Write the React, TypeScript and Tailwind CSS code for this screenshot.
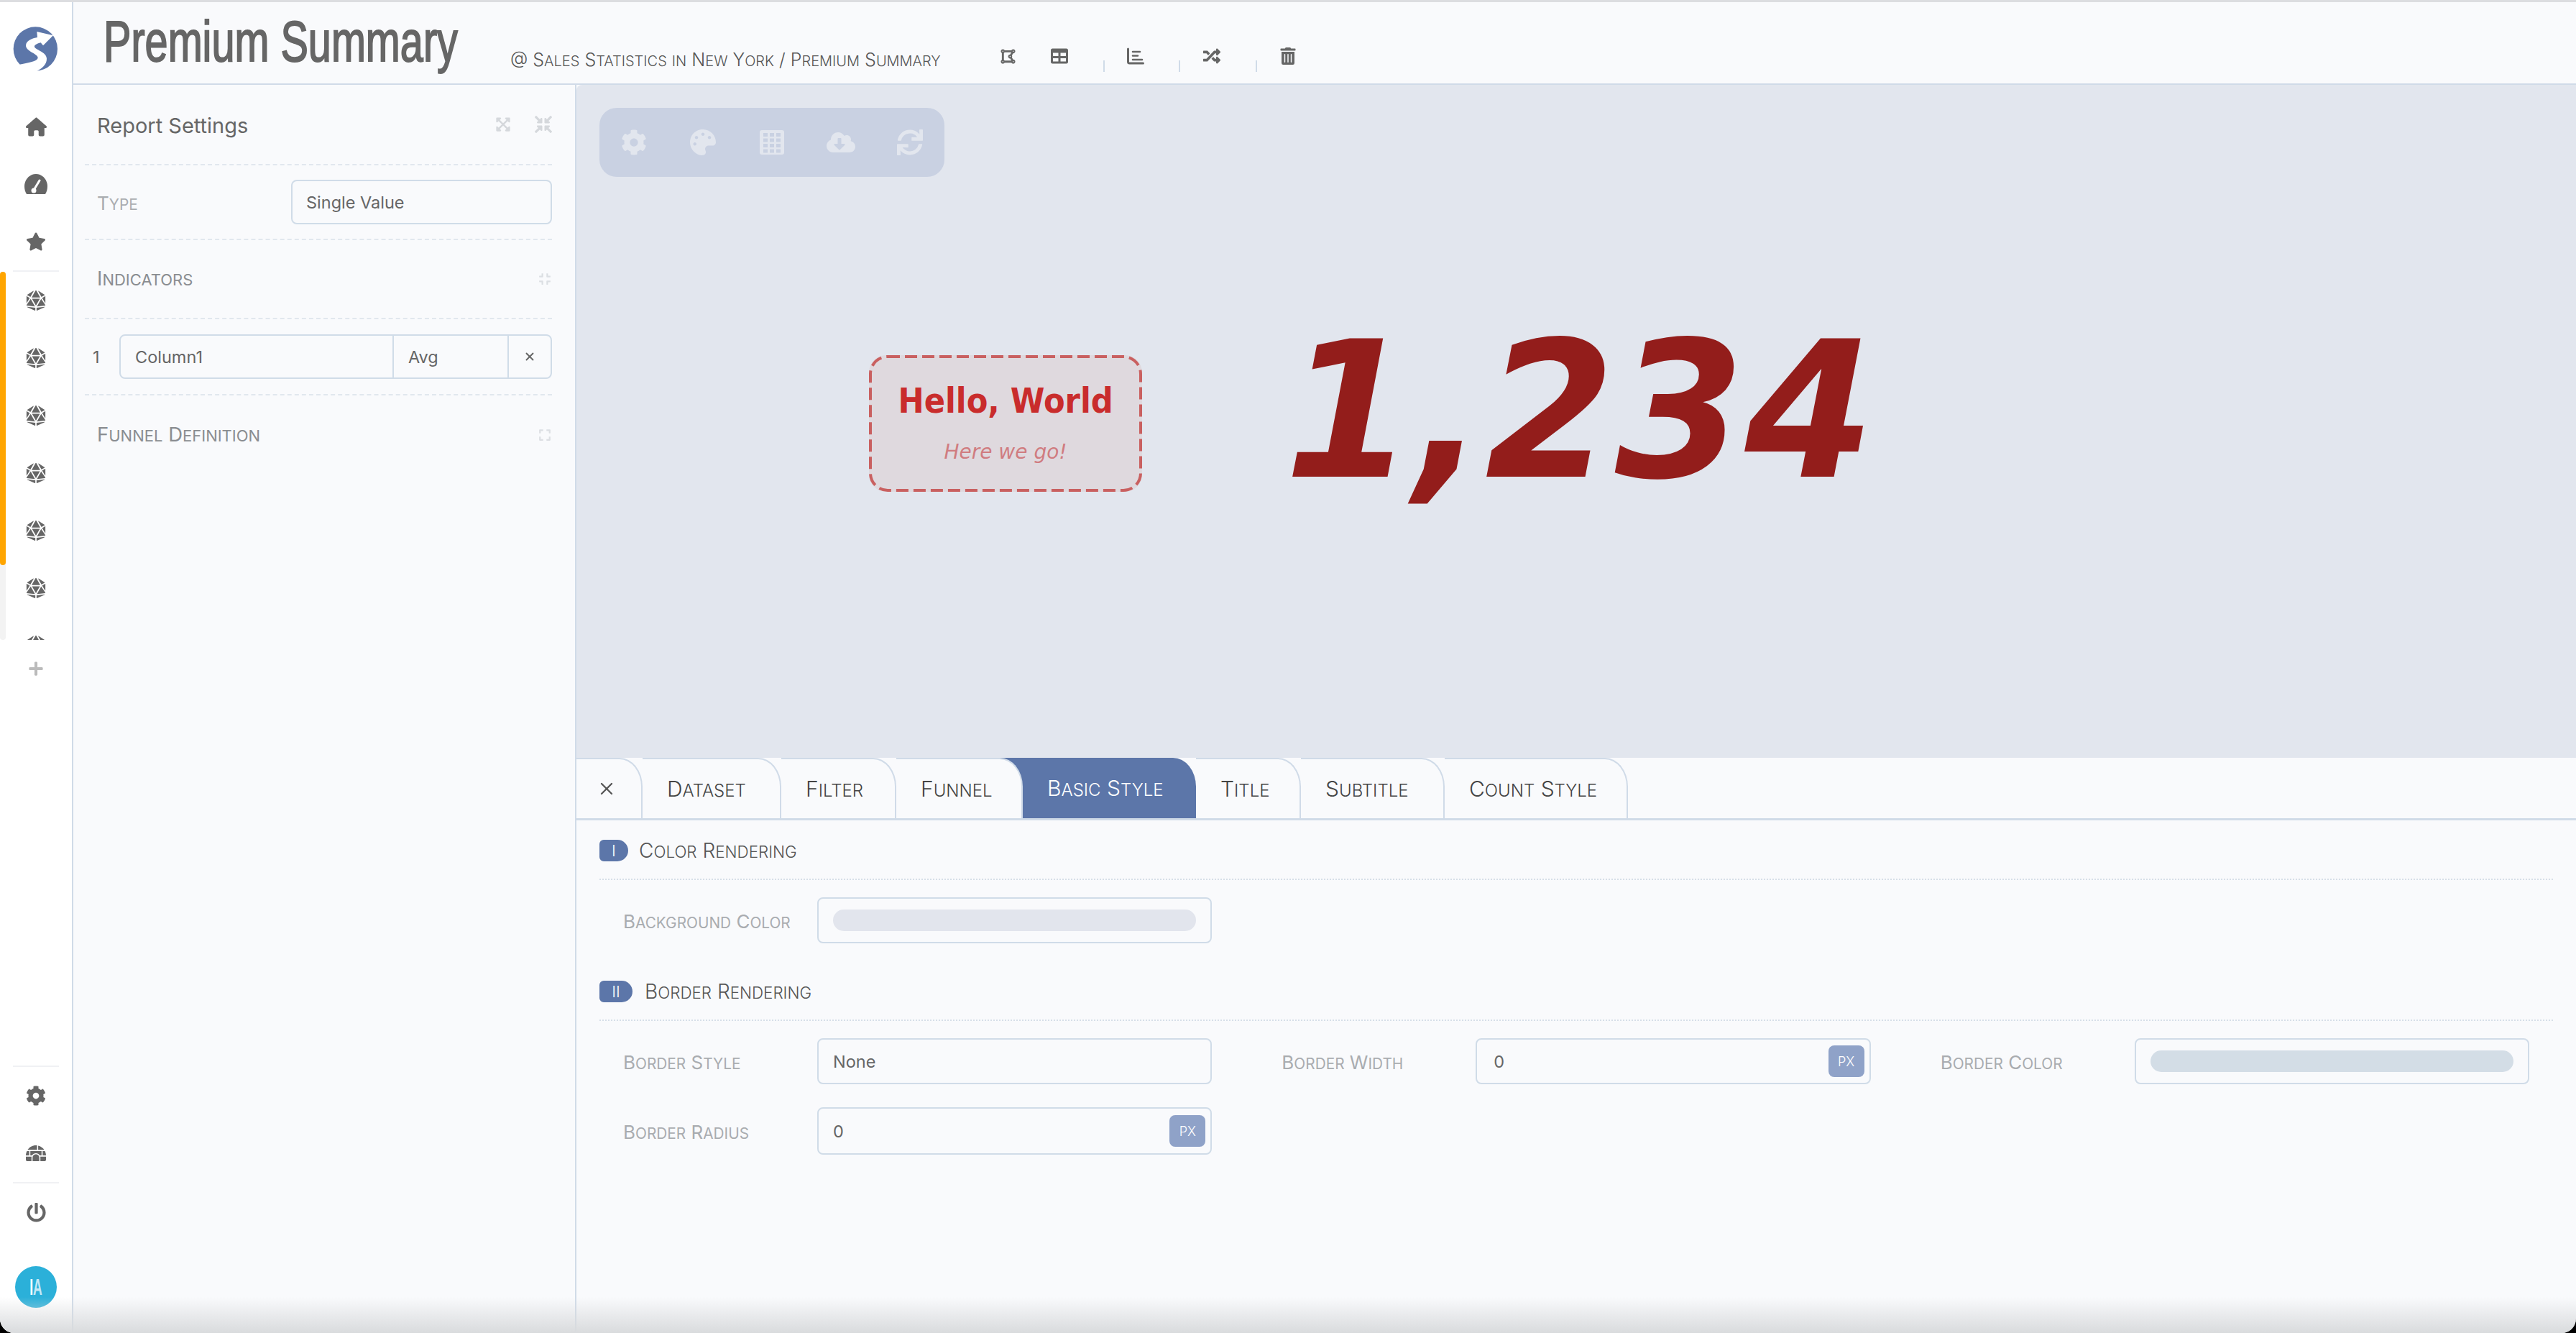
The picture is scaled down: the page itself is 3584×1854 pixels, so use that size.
import * as React from "react";
import {
  FaCloudDownloadAlt,
  FaCog,
  FaCompress,
  FaCompressArrowsAlt,
  FaDiceD20,
  FaDrawPolygon,
  FaExpand,
  FaExpandArrowsAlt,
  FaIgloo,
  FaPalette,
  FaPlus,
  FaPowerOff,
  FaRandom,
  FaStar,
  FaSync,
  FaTable,
  FaTrashAlt,
} from "react-icons/fa";
import { FaHouse } from "react-icons/fa6";
import { X } from "lucide-react";

function Caps({ children }: { children: string }) {
  const parts = children.match(/[a-z]+|[^a-z]+/g) ?? [];
  return (
    <>
      {parts.map((p, i) =>
        /[a-z]/.test(p) ? (
          <span key={i} className="text-[0.8em] uppercase">
            {p}
          </span>
        ) : (
          <span key={i}>{p}</span>
        ),
      )}
    </>
  );
}

function Logo() {
  return (
    <svg width="80" height="80" viewBox="0 0 240 240">
      <circle cx="118" cy="114" r="92" fill="#5c76a9" />
      <path
        d="M48 180 C90 172 125 165 128 152 C130 135 78 125 78 100 C78 78 110 68 126 66 L124 42 L192 58 L150 100 L140 88 C125 92 112 98 114 106 C118 118 165 128 165 155 C165 180 145 195 125 206 L120 230 L40 205 Z"
        fill="#fff"
      />
    </svg>
  );
}

function GaugeIcon() {
  return (
    <svg width="32" height="28" viewBox="0 0 32 28">
      <path d="M3 28 C1 25 0 21 0 17 C0 8 7 0 16 0 C25 0 32 8 32 17 C32 21 31 25 29 28 Z" fill="currentColor" />
      <path d="M12 24 L21 9" stroke="#fff" strokeWidth="3" strokeLinecap="round" />
      <circle cx="13" cy="23" r="3.5" fill="#fff" />
    </svg>
  );
}

function AxisBarsIcon() {
  return (
    <svg width="24" height="24" viewBox="0 0 24 24" fill="none" stroke="currentColor" strokeWidth="3" strokeLinecap="round">
      <path d="M1.5 2 V20 Q1.5 22 3.5 22 H22.5" />
      <path d="M8 6 H18 M8 11.5 H15 M8 17 H21" strokeWidth="2.6" />
    </svg>
  );
}

function GridIcon() {
  const holes = [];
  for (let r = 0; r < 4; r++) {
    for (let c = 0; c < 3; c++) {
      holes.push(<rect key={`${r}-${c}`} x={6 + c * 9} y={5 + r * 7.5} width="6" height="5" fill="#c9d1e2" />);
    }
  }
  return (
    <svg width="36" height="36" viewBox="0 0 36 36">
      <rect x="1" y="1" width="34" height="34" rx="3" fill="currentColor" />
      {holes}
    </svg>
  );
}

function NavItem({ children }: { children: React.ReactNode }) {
  return <div className="flex h-[80px] shrink-0 items-center justify-center text-[#666]">{children}</div>;
}

function Sidebar() {
  return (
    <aside className="flex w-[102px] shrink-0 flex-col border-r-2 border-[#d0dbe8] bg-white">
      <div className="flex h-[133px] shrink-0 justify-center pt-[27px]">
        <Logo />
      </div>
      <NavItem><FaHouse size={29} /></NavItem>
      <NavItem><GaugeIcon /></NavItem>
      <NavItem><FaStar size={28} /></NavItem>
      <div className="mx-[18px] h-[2px] shrink-0 bg-[#f0f1f4]" />
      <div className="relative h-[512px] shrink-0 overflow-hidden">
        <div className="absolute left-0 top-0 h-full w-[8px] rounded-full bg-[#f3f3f3]">
          <div className="h-[408px] w-full rounded-full bg-[#ffa500]" />
        </div>
        {[0, 1, 2, 3, 4, 5, 6].map((i) => (
          <NavItem key={i}><FaDiceD20 size={28} /></NavItem>
        ))}
      </div>
      <div className="flex h-[80px] shrink-0 items-center justify-center text-[#bbbbbb]">
        <FaPlus size={22} />
      </div>
      <div className="flex-1" />
      <div className="mx-[18px] h-[2px] shrink-0 bg-[#f0f1f4]" />
      <NavItem><FaCog size={28} /></NavItem>
      <NavItem><FaIgloo size={28} /></NavItem>
      <div className="mx-[18px] h-[2px] shrink-0 bg-[#f0f1f4]" />
      <NavItem><FaPowerOff size={27} /></NavItem>
      <div className="mb-[35px] ml-[21px] mt-[35px] flex h-[58px] w-[58px] shrink-0 items-center justify-center overflow-hidden rounded-full bg-[#2bb0d9] [font-family:'Liberation_Sans',sans-serif] text-[32px] font-bold leading-none">
        <span className="scale-x-[0.55]">
          <span className="text-white">I</span>
          <span className="text-[#c4e8f6]">A</span>
        </span>
      </div>
    </aside>
  );
}

function HeaderIcon({ children }: { children: React.ReactNode }) {
  return <div className="flex w-[72px] justify-center text-[#666]">{children}</div>;
}

function Sep({ className }: { className: string }) {
  return <div className={`mt-[28px] h-[16px] w-[2px] bg-[#d0dbe8] ${className}`} />;
}

function Header() {
  return (
    <header className="flex h-[115px] shrink-0 border-b-2 border-[#d0dbe8]">
      <div className="w-[608px] shrink-0 pl-[42px]">
        <div className="origin-left scale-x-[0.72] whitespace-nowrap [font-family:'Liberation_Sans',sans-serif] text-[80px] leading-[110px] text-[#666] [-webkit-text-stroke:2px_#666]">
          Premium Summary
        </div>
      </div>
      <div className="w-[656px] shrink-0 whitespace-nowrap pt-[63px] text-[25px] font-light leading-[34px] text-[#555]">
        <Caps>@ Sales Statistics in New York / Premium Summary</Caps>
      </div>
      <div className="mt-[51px] flex h-[48px] items-center self-start">
        <HeaderIcon><FaDrawPolygon size={23} /></HeaderIcon>
        <HeaderIcon><FaTable size={24} /></HeaderIcon>
        <Sep className="ml-[25px] mr-[7px]" />
        <HeaderIcon><AxisBarsIcon /></HeaderIcon>
        <Sep className="ml-[24px] mr-[8px]" />
        <HeaderIcon><FaRandom size={24} /></HeaderIcon>
        <Sep className="ml-[25px] mr-[7px]" />
        <HeaderIcon><FaTrashAlt size={24} /></HeaderIcon>
      </div>
    </header>
  );
}

function Dashed() {
  return <div className="h-0 border-t-2 border-dashed border-[#e1e7ee]" />;
}

function SettingsPanel() {
  return (
    <section className="flex w-[700px] shrink-0 flex-col border-r-2 border-[#d0dbe8] pl-[16px] pr-[32px] text-[#666]">
      <div className="flex h-[110px] items-center pl-[17px]">
        <span className="pt-[3px] text-[29px]">Report Settings</span>
        <div className="ml-auto flex items-center gap-[33px] text-[#d5d8dc]">
          <FaExpandArrowsAlt size={22} />
          <FaCompressArrowsAlt size={24} />
        </div>
      </div>
      <Dashed />
      <div className="flex h-[102px] items-center pl-[17px]">
        <span className="w-[270px] pt-[2px] text-[26px] text-[#a9acb0]"><Caps>Type</Caps></span>
        <div className="flex h-[62px] flex-1 items-center rounded-lg border-2 border-[#d0dce8] pl-[19px] pt-[2px] text-[23.5px]">
          Single Value
        </div>
      </div>
      <Dashed />
      <div className="flex h-[108px] items-center pl-[17px] pr-[1px]">
        <span className="text-[27.5px] text-[#8a8d91]"><Caps>Indicators</Caps></span>
        <FaCompress size={18} className="ml-auto text-[#dcdfe3]" />
      </div>
      <Dashed />
      <div className="flex h-[104px] items-center pl-[11px] text-[23.5px]">
        <span className="w-[37px] pt-[2px]">1</span>
        <div className="flex h-[62px] flex-1 items-stretch rounded-lg border-2 border-[#d0dce8]">
          <div className="flex w-[380px] items-center border-r-2 border-[#d0dce8] pl-[20px] pt-[2px]">Column1</div>
          <div className="flex w-[160px] items-center border-r-2 border-[#d0dce8] pl-[20px] pt-[2px]">Avg</div>
          <div className="flex flex-1 items-center justify-center">
            <X size={18} strokeWidth={2.5} />
          </div>
        </div>
      </div>
      <Dashed />
      <div className="flex h-[110px] items-center pl-[17px] pr-[1px]">
        <span className="text-[27.5px] text-[#8a8d91]"><Caps>Funnel Definition</Caps></span>
        <FaExpand size={18} className="ml-auto text-[#dcdfe3]" />
      </div>
    </section>
  );
}

function Canvas() {
  return (
    <div className="relative flex h-[936px] shrink-0 items-start rounded-tl-[8px] bg-[#e2e6ee] pl-[407px] pt-[376px] [font-family:'DejaVu_Sans',sans-serif]">
      <div className="absolute left-[32px] top-[32px] flex h-[96px] w-[480px] items-center rounded-[24px] bg-[#c9d1e2] text-[#e2e6ee]">
        <div className="flex w-[96px] justify-center"><FaCog size={36} /></div>
        <div className="flex w-[96px] justify-center"><FaPalette size={36} /></div>
        <div className="flex w-[96px] justify-center"><GridIcon /></div>
        <div className="flex w-[96px] justify-center"><FaCloudDownloadAlt size={40} /></div>
        <div className="flex w-[96px] justify-center"><FaSync size={36} /></div>
      </div>
      <div className="relative flex h-[190px] w-[380px] shrink-0 flex-col items-center rounded-[24px] bg-[#dfd9de]">
        <svg className="absolute inset-0" width="380" height="190">
          <rect x="2" y="2" width="376" height="186" rx="24" fill="none" stroke="#c96060" strokeWidth="4" strokeDasharray="17 7" />
        </svg>
        <div className="mt-[35px] scale-x-[0.9] whitespace-nowrap text-[48px] font-bold leading-[56px] text-[#c92c2c]">Hello, World</div>
        <div className="mt-[26px] text-[28px] italic leading-[36px] text-[#d07c80]">Here we go!</div>
      </div>
      <div className="-mt-[72px] ml-[198px] origin-left scale-x-[0.983] whitespace-nowrap text-[264px] font-bold italic leading-[300px] text-[#931d1b]">1,234</div>
    </div>
  );
}

const tabs = [
  { label: "Dataset", w: "w-[193px]" },
  { label: "Filter", w: "w-[160px]" },
  { label: "Funnel", w: "w-[176px]" },
  { label: "Title", w: "w-[146px]" },
  { label: "Subtitle", w: "w-[200px]" },
  { label: "Count Style", w: "w-[255px]" },
];

function Tab({ label, w }: { label: string; w: string }) {
  return (
    <div
      className={`relative z-10 flex h-full ${w} items-center rounded-tr-[32px_40px] border-r-2 border-t-2 border-[#d0dbe8] bg-[#f9fafc] pl-[34px] text-[30px] font-light text-[#444]`}
    >
      <span><Caps>{label}</Caps></span>
    </div>
  );
}

function TabBar() {
  return (
    <div className="flex h-[87px] shrink-0 border-b-[3px] border-[#d0dbe8]">
      <div className="relative z-10 flex h-full w-[92px] items-center rounded-tr-[32px_40px] border-r-2 border-t-2 border-[#d0dbe8] bg-[#f9fafc] pl-[28px] text-[#555]">
        <X size={28} strokeWidth={2} />
      </div>
      {tabs.slice(0, 3).map((t) => (
        <Tab key={t.label} {...t} />
      ))}
      <div className="-ml-[32px] flex h-full w-[273px] items-center rounded-tr-[32px_40px] bg-[#5c76a9] pl-[66px] text-[30px] font-light text-white">
        <span><Caps>Basic Style</Caps></span>
      </div>
      {tabs.slice(3).map((t) => (
        <Tab key={t.label} {...t} />
      ))}
    </div>
  );
}

function SectionTitle({ mark, w, title, gap }: { mark: string; w: string; title: string; gap: string }) {
  return (
    <div className="flex h-[56px] items-start border-b-2 border-dotted border-[#d6dfe8]">
      <span
        className={`flex h-[30px] ${w} items-center justify-center rounded-l-[6px] rounded-r-[15px] bg-[#5c76a9] text-[22px] font-light leading-none text-white`}
      >
        {mark}
      </span>
      <span className={`${gap} text-[28px] font-light leading-[30px] text-[#555]`}><Caps>{title}</Caps></span>
    </div>
  );
}

function Field({ label, children, h = "h-[64px]" }: { label: string; children: React.ReactNode; h?: string }) {
  return (
    <div className="flex items-center">
      <span className="w-[270px] shrink-0 pt-[2px] text-[26px] text-[#a9acb0]"><Caps>{label}</Caps></span>
      <div className={`flex ${h} flex-1 items-center rounded-lg border-2 border-[#d0dce8] text-[23.5px] text-[#666]`}>
        {children}
      </div>
    </div>
  );
}

function Px() {
  return (
    <span className="ml-auto mr-[7px] flex h-[44px] w-[50px] items-center justify-center rounded-lg bg-[#8fa2c8] text-[18px] font-light text-white">
      PX
    </span>
  );
}

function BottomPanel() {
  return (
    <div className="flex flex-1 flex-col">
      <TabBar />
      <div className="px-[32px] pt-[27px]">
        <SectionTitle mark="I" w="w-[40px]" title="Color Rendering" gap="ml-[15px]" />
        <div className="mb-[52px] mt-[24px] grid grid-cols-3 gap-x-[97px] px-[33px]">
          <Field label="Background Color">
            <span className="mx-[20px] h-[30px] flex-1 rounded-full bg-[#e2e5ed]" />
          </Field>
        </div>
        <SectionTitle mark="II" w="w-[46px]" title="Border Rendering" gap="ml-[17px]" />
        <div className="mt-[24px] grid grid-cols-3 gap-x-[97px] gap-y-[32px] px-[33px]">
          <Field label="Border Style">
            <span className="pl-[20px] pt-[2px]">None</span>
          </Field>
          <Field label="Border Width">
            <span className="pl-[23px] pt-[2px]">0</span>
            <Px />
          </Field>
          <Field label="Border Color">
            <span className="mx-[20px] h-[30px] flex-1 rounded-full bg-[#d3dde6]" />
          </Field>
          <Field label="Border Radius" h="h-[66px]">
            <span className="pl-[20px] pt-[2px]">0</span>
            <Px />
          </Field>
        </div>
      </div>
    </div>
  );
}

export default function App() {
  return (
    <div className="h-screen w-full overflow-hidden bg-black [font-family:Inter,sans-serif]">
      <div className="relative flex h-full flex-col overflow-hidden rounded-b-[20px] bg-[#f9fafc]">
        <div className="h-[3px] shrink-0 bg-[#dcdde0]" />
        <div className="flex min-h-0 flex-1">
          <Sidebar />
          <div className="flex min-w-0 flex-1 flex-col">
            <Header />
            <div className="flex min-h-0 flex-1">
              <SettingsPanel />
              <div className="flex min-w-0 flex-1 flex-col">
                <Canvas />
                <BottomPanel />
              </div>
            </div>
          </div>
        </div>
        <div className="pointer-events-none absolute inset-x-0 bottom-0 h-[50px] bg-gradient-to-t from-[#d9dbdd] to-transparent" />
      </div>
    </div>
  );
}
